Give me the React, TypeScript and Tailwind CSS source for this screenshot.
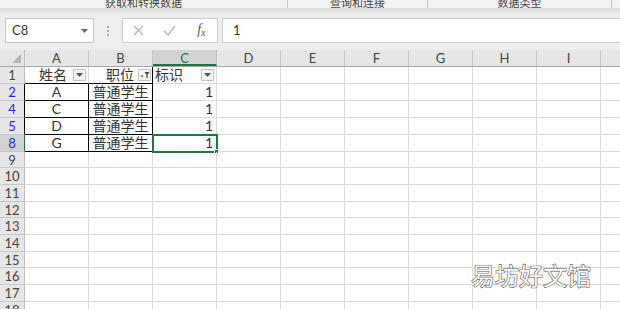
const font = { fontFamily: 'Lato, "Noto Sans CJK SC", "Noto Sans", sans-serif' }

const colLetters = ['A', 'B', 'C', 'D', 'E', 'F', 'G', 'H', 'I', 'J']

type Row = { n: string; h: string; filtered?: boolean; active?: boolean; a?: string; b?: string; c?: string }

const rows: Row[] = [
  { n: '1', h: 'h-[17px]' },
  { n: '2', h: 'h-[17px]', filtered: true, a: 'A', b: '普通学生', c: '1' },
  { n: '4', h: 'h-[17px]', filtered: true, a: 'C', b: '普通学生', c: '1' },
  { n: '5', h: 'h-[17px]', filtered: true, a: 'D', b: '普通学生', c: '1' },
  { n: '8', h: 'h-[17px]', filtered: true, active: true, a: 'G', b: '普通学生', c: '1' },
  { n: '9', h: 'h-[16px]' },
  { n: '10', h: 'h-[17px]' },
  { n: '11', h: 'h-[17px]' },
  { n: '12', h: 'h-[16px]' },
  { n: '13', h: 'h-[17px]' },
  { n: '14', h: 'h-[17px]' },
  { n: '15', h: 'h-[16px]' },
  { n: '16', h: 'h-[17px]' },
  { n: '17', h: 'h-[17px]' },
  { n: '18', h: 'h-[17px]' },
]

function DropButton({ filter }: { filter?: boolean }) {
  return (
    <span className="flex h-[12px] w-[13px] shrink-0 items-center justify-center border border-[#c4c4c4] bg-[#f4f4f4]">
      {filter ? (
        <svg width="10" height="8" viewBox="0 0 10 8">
          <path d="M0.5 4.5 L3.5 4.5 L2 6.5 Z" fill="#555" />
          <path d="M4.5 1 L9.5 1 L7.6 3.6 L7.6 7 L6.4 7 L6.4 3.6 Z" fill="#444" />
        </svg>
      ) : (
        <svg width="7" height="4" viewBox="0 0 7 4">
          <path d="M0 0 L7 0 L3.5 4 Z" fill="#555" />
        </svg>
      )}
    </span>
  )
}

export default function App() {
  return (
    <div className="relative h-[309px] w-[620px] overflow-hidden bg-white text-[#333]" style={font}>
      {/* ribbon group labels, cut off at top */}
      <div className="flex h-[8px] overflow-hidden bg-[#f3f3f3] text-[11px] leading-[12px] text-[#444]">
        <div className="flex w-[288px] items-end justify-center border-r border-[#c8c8c8]">
          <span className="-mb-[1px]">获取和转换数据</span>
        </div>
        <div className="flex w-[140px] items-end justify-center border-r border-[#c8c8c8]">
          <span className="-mb-[1px]">查询和连接</span>
        </div>
        <div className="flex w-[184px] items-end justify-center border-r border-[#c8c8c8]">
          <span className="-mb-[1px]">数据类型</span>
        </div>
      </div>
      <div className="h-[6px] bg-gradient-to-b from-[#d9d9d9] to-[#ececec]" />

      {/* formula bar */}
      <div className="flex h-[36px] items-start bg-[#eeeeee] pt-[4px]">
        <div className="ml-[5px] flex h-[25px] w-[89px] items-center justify-between border border-[#c6c6c6] bg-white pl-[6px] pr-[5px] text-[13px] text-[#333]">
          <span>C8</span>
          <svg width="7" height="4" viewBox="0 0 7 4">
            <path d="M0 0 L7 0 L3.5 4 Z" fill="#666" />
          </svg>
        </div>
        <div className="flex h-[25px] w-[28px] flex-col items-center justify-center gap-[2px]">
          <span className="h-[2px] w-[2px] bg-[#a8a8a8]" />
          <span className="h-[2px] w-[2px] bg-[#a8a8a8]" />
          <span className="h-[2px] w-[2px] bg-[#a8a8a8]" />
        </div>
        <div className="flex h-[25px] w-[96px] items-center border border-[#cfcfcf] bg-white">
          <span className="flex w-[32px] justify-center">
            <svg width="11" height="11" viewBox="0 0 11 11">
              <path d="M1 1 L10 10 M10 1 L1 10" stroke="#b4b4b4" strokeWidth="1.2" />
            </svg>
          </span>
          <span className="flex w-[32px] justify-center">
            <svg width="13" height="11" viewBox="0 0 13 11">
              <path d="M1 6 L5 10 L12 1" stroke="#b4b4b4" strokeWidth="1.3" fill="none" />
            </svg>
          </span>
          <span className="flex w-[32px] justify-center">
            <span className="text-[14px] italic leading-[16px] text-[#555]" style={{ fontFamily: '"Liberation Serif", serif' }}>
              f<span className="relative top-[2px] text-[10px]">x</span>
            </span>
          </span>
        </div>
        <div className="ml-[4px] flex h-[25px] flex-1 items-center border-y border-l border-[#cfcfcf] bg-white pl-[10px] text-[13px] text-[#333]">
          1
        </div>
      </div>

      {/* column headers */}
      <div className="flex h-[17px] border-b border-[#a6a6a6] bg-[#e6e6e6] text-[13px] leading-[16px] text-[#444]">
        <div className="flex w-[25px] shrink-0 items-end justify-end border-r border-[#bdbdbd] pb-[3px] pr-[3px]">
          <svg width="9" height="9" viewBox="0 0 9 9">
            <path d="M9 0 L9 9 L0 9 Z" fill="#b5b5b5" />
          </svg>
        </div>
        {colLetters.map((l) => (
          <div
            key={l}
            className={
              l === 'C'
                ? 'flex w-[64px] shrink-0 justify-center border-r border-b-2 border-r-[#bdbdbd] border-b-[#217346] bg-[#d2d2d2] text-[#217346]'
                : 'flex w-[64px] shrink-0 justify-center border-r border-[#c6c6c6]'
            }
          >
            {l}
          </div>
        ))}
      </div>

      {/* rows */}
      {rows.map((r) => {
        const boxed = r.filtered
        const abBorder = boxed || r.n === '1' ? 'border-b-black' : 'border-b-[#dadada]'
        return (
          <div key={r.n} className={`flex ${r.h} text-[14px] leading-[16px]`}>
            <div
              className={`flex w-[25px] shrink-0 items-center justify-center border-b border-r border-b-[#c8c8c8] text-[13px] ${
                r.active ? 'border-r-[#217346] bg-[#d2d2d2]' : boxed ? 'border-r-black bg-[#e6e6e6]' : 'border-r-[#bdbdbd] bg-[#e6e6e6]'
              } ${r.filtered ? 'text-[#1f1ff0]' : 'text-[#444]'}`}
            >
              {r.n}
            </div>
            {r.n === '1' ? (
              <>
                <div className={`flex w-[64px] shrink-0 items-center justify-end gap-[6px] border-b border-r border-r-[#dadada] pr-[2px] ${abBorder}`}>
                  <span>姓名</span>
                  <DropButton />
                </div>
                <div className={`flex w-[64px] shrink-0 items-center justify-end gap-[4px] border-b border-r border-r-black pr-[1px] ${abBorder}`}>
                  <span>职位</span>
                  <DropButton filter />
                </div>
                <div className="flex w-[64px] shrink-0 items-center justify-between border-b border-r border-[#dadada] pl-[2px] pr-[2px]">
                  <span>标识</span>
                  <DropButton />
                </div>
              </>
            ) : (
              <>
                <div className={`flex w-[64px] shrink-0 items-center justify-center border-b border-r ${boxed ? 'border-black' : 'border-[#dadada]'}`}>
                  {r.a}
                </div>
                <div className={`flex w-[64px] shrink-0 items-center justify-center border-b border-r ${boxed ? 'border-black' : 'border-[#dadada]'}`}>
                  {r.b}
                </div>
                <div className="relative flex w-[64px] shrink-0 items-center justify-end border-b border-r border-[#dadada] pr-[3px]">
                  {r.c}
                  {r.active && (
                    <>
                      <span className="absolute -left-[1px] -top-[1px] h-[19px] w-[66px] border-2 border-[#217346]" />
                      <span className="absolute -bottom-[3px] -right-[3px] h-[5px] w-[5px] border border-white bg-[#217346]" />
                    </>
                  )}
                </div>
              </>
            )}
            {colLetters.slice(3).map((l) => (
              <div key={l} className="w-[64px] shrink-0 border-b border-r border-[#dadada]" />
            ))}
          </div>
        )
      })}

      {/* watermark */}
      <div
        className="absolute left-[471px] top-[261px] text-[24px] leading-[28px] text-white [-webkit-text-stroke:1.2px_#555]"
        style={{ fontFamily: '"Noto Sans CJK SC", sans-serif', paintOrder: 'stroke fill' }}
      >
        易坊好文馆
      </div>
    </div>
  )
}
